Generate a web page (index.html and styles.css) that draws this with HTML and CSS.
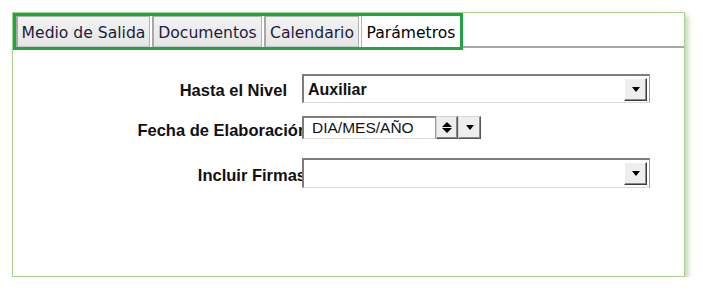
FILE: index.html
```html
<!DOCTYPE html>
<html lang="es">
<head>
  <meta charset="UTF-8" />
  <title>Parámetros</title>
  <link rel="stylesheet" href="styles.css">
</head>
<body>
  <div class="panel">
    <div class="tabbar">
      <div class="tabs-outline">
        <div class="tab tab-medio">Medio de Salida</div>
        <div class="tab tab-docs">Documentos</div>
        <div class="tab tab-cal">Calendario</div>
        <div class="tab tab-param active">Parámetros</div>
      </div>
      <div class="tabbar-rest"></div>
    </div>

    <div class="form">
      <div class="row row-nivel">
        <label class="lbl">Hasta el Nivel</label>
        <div class="combo">
          <span class="combo-value">Auxiliar</span>
          <span class="drop-btn"><i class="arrow"></i></span>
        </div>
      </div>

      <div class="row row-fecha">
        <label class="lbl lbl-fecha">Fecha de Elaboración</label>
        <div class="datebox">DIA/MES/AÑO</div>
        <span class="spin">
          <i class="arrow-up"></i>
          <i class="arrow"></i>
        </span>
        <span class="drop-btn small"><i class="arrow"></i></span>
      </div>

      <div class="row row-firmas">
        <label class="lbl lbl-firmas">Incluir Firmas</label>
        <div class="combo">
          <span class="combo-value"></span>
          <span class="drop-btn"><i class="arrow"></i></span>
        </div>
      </div>
    </div>
  </div>
</body>
</html>
```

FILE: styles.css
```css
body { margin: 0; background: #fff; font-family: "Liberation Sans", Arial, sans-serif; }

.panel {
  margin: 12px 0 0 12px;
  width: 673px;
  height: 265px;
  box-sizing: border-box;
  border: 1px solid #a9d18e;
  box-shadow: 3px 3px 5px rgba(140, 180, 120, 0.55);
  background: #fff;
}

/* tabs */
.tabbar { display: flex; align-items: flex-start; }
.tabs-outline {
  display: flex;
  gap: 2px;
  border: 3px solid #21a544;
  background: #fff;
}
.tab {
  height: 31px;
  box-sizing: border-box;
  padding-top: 7px;
  text-align: center;
  font-family: "DejaVu Sans", Tahoma, sans-serif;
  font-size: 15.6px;
  color: #1c1c40;
  background: linear-gradient(#f2f2f2, #e6e6e6);
  border: 1px solid #b0b0b0;
  border-left: 2px solid #a8a8a8;
  border-bottom: 1px solid #c8c8c8;
  white-space: nowrap;
}
.tab-medio { width: 134px; }
.tab-docs { width: 110px; }
.tab-cal { width: 95px; }
.tab-param { width: 99px; }
.tab.active {
  background: #fff;
  color: #000;
  border: none;
  border-left: 1px solid #b0b0b0;
  padding-top: 8px;
}
.tabbar-rest {
  flex: 1;
  height: 33px;
  border-bottom: 2px solid #a6a6a6;
}

/* form */
.form { padding-top: 24px; }
.row { display: flex; align-items: center; }
.row-nivel { height: 29px; }
.row-fecha { height: 23px; margin-top: 13px; }
.row-firmas { height: 30px; margin-top: 19px; }

.lbl {
  width: 289px;
  flex: none;
  box-sizing: border-box;
  text-align: right;
  font-weight: bold;
  font-size: 16.5px;
  color: #111;
  white-space: nowrap;
}
.row-nivel .lbl { padding: 3px 15px 0 0; }
.lbl-fecha { width: 295px; margin-right: -6px; padding-top: 6px; }
.lbl-firmas { width: 293px; margin-right: -4px; padding-top: 4px; }

.combo, .datebox {
  position: relative;
  z-index: 1;
  box-sizing: border-box;
  background: #fff;
  border-top: 2px solid #7c7c7c;
  border-left: 2px solid #7c7c7c;
  border-right: 1px solid #9a9a9a;
  border-bottom: 1px solid #dcdcdc;
}
.combo {
  width: 348px;
  height: 100%;
  display: flex;
  align-items: center;
  justify-content: space-between;
}
.combo-value {
  padding: 1px 0 0 4px;
  font-weight: bold;
  font-size: 16px;
  color: #111;
}
.datebox {
  width: 134px;
  height: 23px;
  padding: 1px 0 0 8px;
  font-size: 15.5px;
  color: #111;
}

.drop-btn, .spin {
  box-sizing: border-box;
  display: flex;
  flex-direction: column;
  align-items: center;
  justify-content: center;
  gap: 2px;
  background: #eeeeee;
  border: 1px solid;
  border-color: #ffffff #3c3c3c #3c3c3c #ffffff;
  box-shadow: inset -1px -1px 0 #8a8a8a;
}
.combo .drop-btn { width: 23px; height: 23px; margin-right: 2px; }
.drop-btn.small { width: 23px; height: 23px; border-color: #d8d8d8 #555 #555 #d8d8d8; }
.spin { width: 22px; height: 23px; gap: 1px; border-color: #d0d0d0 #555 #555 #d0d0d0; }

.arrow, .arrow-up {
  width: 0;
  height: 0;
  border-left: 5px solid transparent;
  border-right: 5px solid transparent;
}
.arrow { border-top: 5px solid #000; }
.arrow-up { border-bottom: 5px solid #000; }
.drop-btn .arrow { border-width: 5px 4px 0; }
```
